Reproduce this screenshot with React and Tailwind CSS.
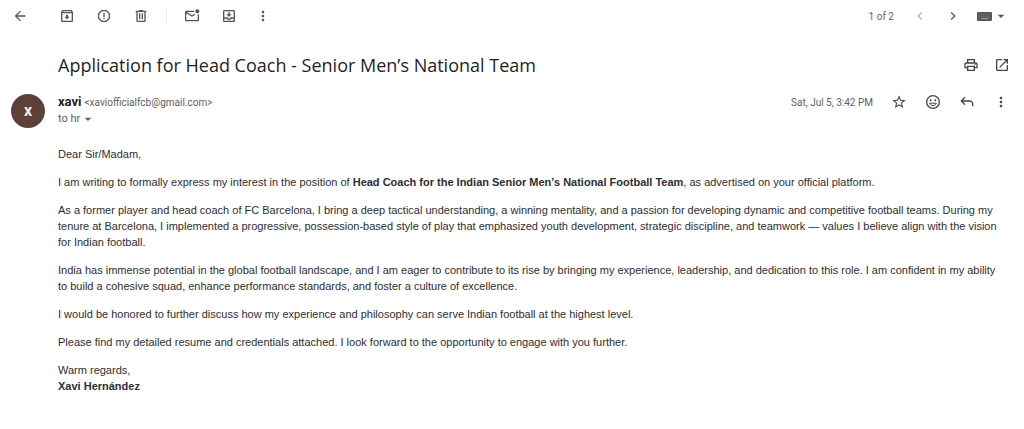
import {
  MdArrowBack,
  MdArrowDropDown,
  MdChevronLeft,
  MdChevronRight,
  MdMoreVert,
  MdOpenInNew,
  MdOutlineArchive,
  MdOutlinePrint,
  MdOutlineReport,
  MdStarBorder,
} from 'react-icons/md';

function Svg({ children }) {
  return (
    <svg viewBox="0 0 24 24" width="16" height="16" fill="currentColor" aria-hidden="true">
      {children}
    </svg>
  );
}

function TrashIcon() {
  return (
    <Svg>
      <path d="M15 4V3H9v1H4v2h1v13c0 1.1.9 2 2 2h10c1.1 0 2-.9 2-2V6h1V4h-5zm2 15H7V6h10v13zM9 8h2v9H9V8zm4 0h2v9h-2V8z" />
    </Svg>
  );
}

function UnreadIcon() {
  return (
    <Svg>
      <path d="M15 4H3.500C2.100 4 1.500 4.900 1.500 6v12c0 1.100.900 2 2 2h17c1.100 0 2-.900 2-2V9.500a5 5 0 0 1-2 .400V18h-17V8l8.500 5.300 5-3.100a5 5 0 0 1-1.500-1.500L12 11 4.500 6H15a5 5 0 0 1 0-2z" />
      <circle cx="20" cy="5" r="3" />
    </Svg>
  );
}

function InboxIcon() {
  return (
    <Svg>
      <path d="M19 3H5c-1.100 0-2 .9-2 2v14c0 1.100.9 2 2 2h14c1.100 0 2-.9 2-2V5c0-1.100-.9-2-2-2zm0 16H5v-3h3.560c.69 1.190 1.970 2 3.450 2s2.750-.81 3.450-2H19v3zm0-5h-4.990c0 1.100-.9 2-2 2s-2-.9-2-2H5V5h14v9z" />
      <path d="M16 9.500h-3V6h-2v3.500H8l4 4 4-4z" />
    </Svg>
  );
}

function SmileIcon() {
  return (
    <Svg>
      <path d="M12 1.500a10.500 10.500 0 1 0 0 21 10.500 10.500 0 0 0 0-21zm0 19a8.500 8.500 0 1 1 0-17 8.500 8.500 0 0 1 0 17z" />
      <circle cx="8.500" cy="9.500" r="1.500" />
      <circle cx="15.500" cy="9.500" r="1.500" />
      <path d="M7 13.800c.8 2.300 2.700 3.700 5 3.700s4.200-1.400 5-3.700z" fill="none" stroke="currentColor" strokeWidth="1.500" />
    </Svg>
  );
}

function ReplyIcon() {
  return (
    <Svg>
      <path d="M9 5l-5.500 5.500L9 16M3.500 10.500H16a4.500 4.500 0 0 1 4.500 4.500v3.500" fill="none" stroke="currentColor" strokeWidth="2" />
    </Svg>
  );
}

function KeyboardIcon() {
  return (
    <svg viewBox="0 0 15 9" width="15" height="9" aria-hidden="true">
      <rect width="15" height="9" rx="1" fill="#5a5a5a" />
      <path d="M2 2.500h11M2 4.500h11" stroke="#777777" strokeDasharray="1 1" />
      <path d="M4 6.500h7" stroke="#a5a5a5" />
    </svg>
  );
}

function IconButton({ label, className = '', children }) {
  return (
    <button type="button" aria-label={label} className={`flex h-4 w-4 items-center justify-center ${className}`}>
      {children}
    </button>
  );
}

function Toolbar() {
  return (
    <div className="flex h-8 items-center justify-between pr-[15px] pl-3 text-[#555555]">
      <div className="flex items-center">
        <IconButton label="Back"><MdArrowBack size={16} /></IconButton>
        <div className="ml-[31px] flex items-center gap-[21px]">
          <IconButton label="Archive"><MdOutlineArchive size={16} /></IconButton>
          <IconButton label="Report spam"><MdOutlineReport size={16} /></IconButton>
          <IconButton label="Delete"><TrashIcon /></IconButton>
        </div>
        <div className="mx-[17px] h-4 w-px bg-[#ececec]" />
        <div className="flex items-center">
          <IconButton label="Mark as unread"><UnreadIcon /></IconButton>
          <IconButton label="Move to" className="ml-[21px]"><InboxIcon /></IconButton>
          <IconButton label="More" className="ml-[18px]"><MdMoreVert size={16} /></IconButton>
        </div>
      </div>
      <div className="flex items-center">
        <span className="text-[10px] text-[#5f6368]">1 of 2</span>
        <IconButton label="Newer" className="ml-[18px] text-[#b4b4b4]"><MdChevronLeft size={16} /></IconButton>
        <IconButton label="Older" className="ml-[17px]"><MdChevronRight size={16} /></IconButton>
        <button type="button" aria-label="Input tools" className="ml-4 flex items-center gap-px">
          <KeyboardIcon />
          <MdArrowDropDown size={16} />
        </button>
      </div>
    </div>
  );
}

function MessageHeader() {
  return (
    <div className="mt-4 flex items-start pr-[15px] pl-[11px]">
      <div className="flex h-[34px] w-[34px] shrink-0 items-center justify-center rounded-full bg-[#5d4037] text-base font-bold text-[#efebe9]">
        x
      </div>
      <div className="ml-[13px] flex-1">
        <div className="flex h-4 items-center justify-between">
          <div className="flex items-baseline gap-[3px]">
            <span className="text-[13px] font-bold text-[#1f1f1f]">xavi</span>
            <span className="text-[10px] text-[#5e5e5e]">&lt;xaviofficialfcb@gmail.com&gt;</span>
          </div>
          <div className="flex items-center gap-[18px] text-[#444746]">
            <span className="text-[10px] text-[#5e5e5e]">Sat, Jul 5, 3:42 PM</span>
            <IconButton label="Star"><MdStarBorder size={16} /></IconButton>
            <IconButton label="Add reaction"><SmileIcon /></IconButton>
            <IconButton label="Reply"><ReplyIcon /></IconButton>
            <IconButton label="More message options"><MdMoreVert size={16} /></IconButton>
          </div>
        </div>
        <button type="button" aria-label="Show details" className="flex h-[18px] items-center text-[11px] text-[#5e5e5e]">
          to hr
          <MdArrowDropDown size={16} />
        </button>
      </div>
    </div>
  );
}

function MessageBody() {
  return (
    <div className="mt-[18px] space-y-3 pr-5 pl-[58px] font-['Liberation_Sans',Arial,sans-serif] text-[11px] leading-4 text-[#2e2e2e]">
      <p>Dear Sir/Madam,</p>
      <p>
        I am writing to formally express my interest in the position of{' '}
        <b>Head Coach for the Indian Senior Men’s National Football Team</b>, as advertised on your official platform.
      </p>
      <p>
        As a former player and head coach of FC Barcelona, I bring a deep tactical understanding, a winning mentality,
        and a passion for developing dynamic and competitive football teams. During my tenure at Barcelona, I
        implemented a progressive, possession-based style of play that emphasized youth development, strategic
        discipline, and teamwork — values I believe align with the vision for Indian football.
      </p>
      <p>
        India has immense potential in the global football landscape, and I am eager to contribute to its rise by
        bringing my experience, leadership, and dedication to this role. I am confident in my ability to build a
        cohesive squad, enhance performance standards, and foster a culture of excellence.
      </p>
      <p>
        I would be honored to further discuss how my experience and philosophy can serve Indian football at the
        highest level.
      </p>
      <p>Please find my detailed resume and credentials attached. I look forward to the opportunity to engage with you further.</p>
      <p>
        Warm regards,
        <br />
        <b>Xavi Hernández</b>
      </p>
    </div>
  );
}

export default function App() {
  return (
    <main className="min-h-screen bg-white font-[Roboto,'Liberation_Sans',sans-serif]">
      <Toolbar />
      <div className="mt-5 flex items-center justify-between pr-[14px] pl-[58px]">
        <h1 className="font-['Open_Sans',Roboto,sans-serif] text-lg leading-[26px] text-[#1f1f1f]">
          Application for Head Coach - Senior Men’s National Team
        </h1>
        <div className="flex items-center gap-[15px] text-[#444746]">
          <IconButton label="Print"><MdOutlinePrint size={16} /></IconButton>
          <IconButton label="Open in new window"><MdOpenInNew size={16} /></IconButton>
        </div>
      </div>
      <MessageHeader />
      <MessageBody />
    </main>
  );
}
